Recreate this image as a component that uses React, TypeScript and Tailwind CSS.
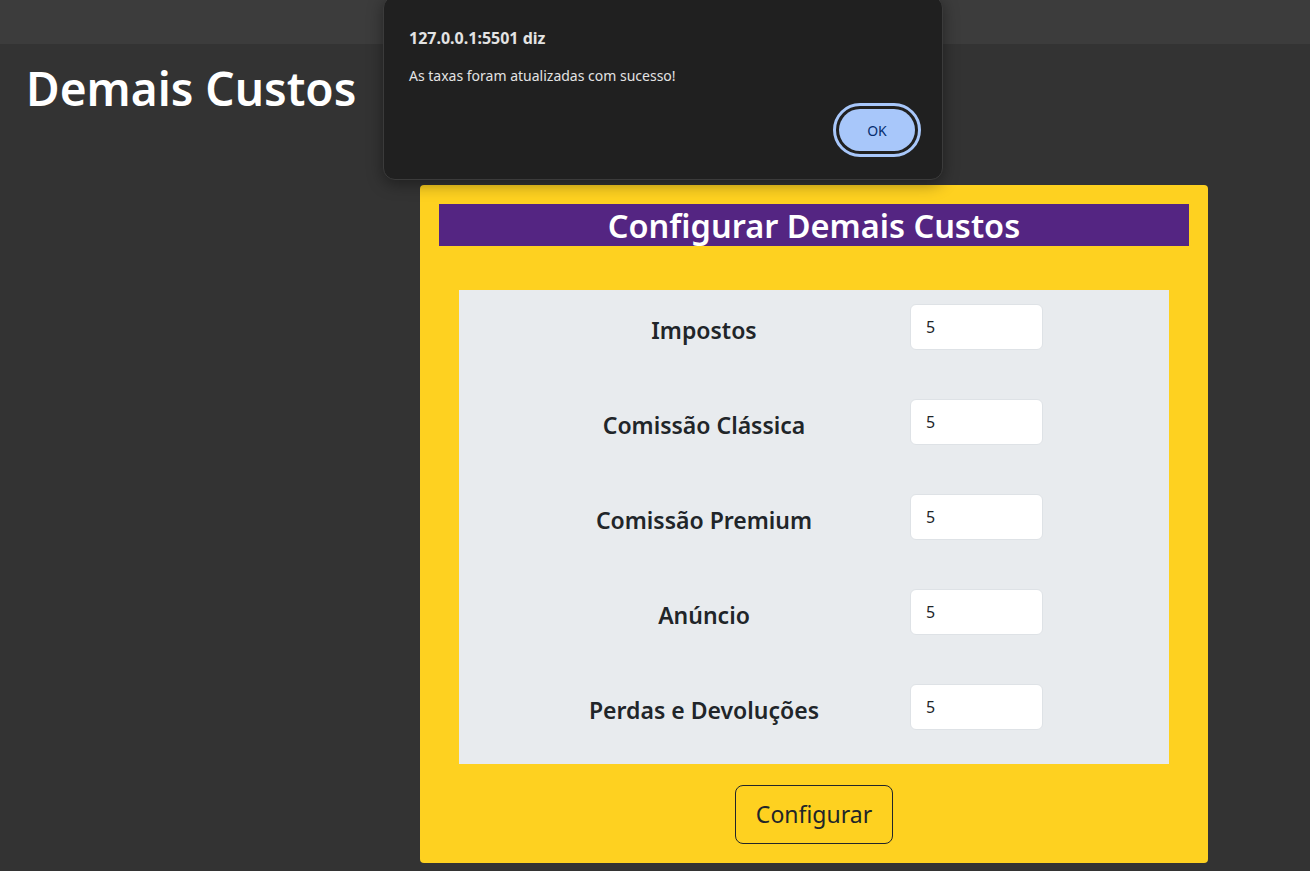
import { useState } from 'react';

const rows = ['Impostos', 'Comissão Clássica', 'Comissão Premium', 'Anúncio', 'Perdas e Devoluções'];

function AlertBox() {
  return (
    <div className="absolute left-[383px] top-[-4px] w-[560px] h-[184px] rounded-[12px] bg-[#202020] border border-[#3b3b3b] shadow-[0_4px_16px_rgba(0,0,0,0.4)] pl-[25px] pr-[21px] pt-[31px]">
      <p className="text-[16px] font-bold text-[#e3e3e3] leading-[20px]">127.0.0.1:5501 diz</p>
      <p className="mt-[19px] text-[14px] text-[#e3e3e3] leading-[18px]">As taxas foram atualizadas com sucesso!</p>
      <div className="flex justify-end mt-[18px]">
        <button className="w-[88px] h-[54px] rounded-full border-[3px] border-[#a8c7fa] p-[3px] bg-[#202020]">
          <span className="flex h-full w-full items-center justify-center rounded-full bg-[#a8c7fa] text-[14px] text-[#062e6f]">
            OK
          </span>
        </button>
      </div>
    </div>
  );
}

export default function App() {
  const [values, setValues] = useState(rows.map(() => '5'));

  return (
    <div className="relative min-h-screen bg-[#333333] font-['Noto_Sans',sans-serif] text-[#212529]">
      <div className="h-[44px] bg-[#3c3c3c]" />
      <h1 className="px-[26px] pt-[17px] text-[46px] font-semibold leading-[1.2] text-white">Demais Custos</h1>

      <div className="ml-[420px] mt-[69px] w-[788px] rounded-[4px] bg-[#fed120] px-[19px] pt-[19px] pb-[19px]">
        <div className="flex h-[42px] items-end justify-center bg-[#542582]">
          <h2 className="text-[32.5px] font-semibold leading-[40px] text-white">Configurar Demais Custos</h2>
        </div>

        <div className="mx-[20px] mt-[44px] flex flex-col gap-[49px] bg-[#e8ebee] pt-[14px] pb-[34px]">
          {rows.map((label, i) => (
            <div key={label} className="flex items-center">
              <label className="ml-[70px] w-[350px] pt-[6px] text-center text-[23px] font-semibold">{label}</label>
              <input
                value={values[i]}
                onChange={(e) => setValues(values.map((v, j) => (j === i ? e.target.value : v)))}
                className="ml-[31px] h-[46px] w-[133px] rounded-[6px] border border-[#dee2e6] bg-white px-[15px] text-[16px] text-[#212529] outline-none"
              />
            </div>
          ))}
        </div>

        <div className="mt-[21px] flex justify-center">
          <button className="h-[59px] w-[158px] rounded-[8px] border border-[#212529] text-[23px] text-[#212529]">
            Configurar
          </button>
        </div>
      </div>

      <AlertBox />
    </div>
  );
}
